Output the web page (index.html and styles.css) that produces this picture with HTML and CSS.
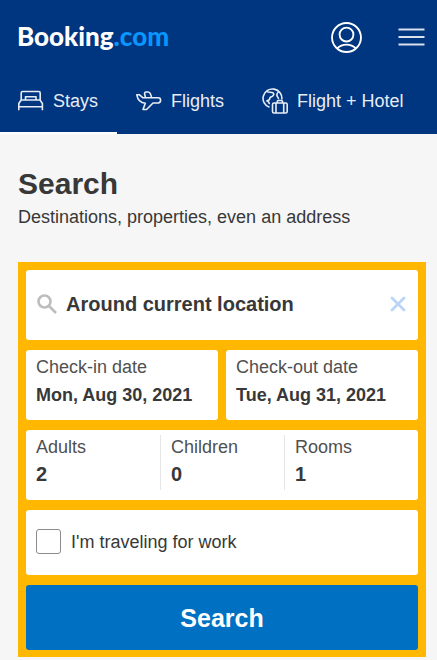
FILE: index.html
```html
<!DOCTYPE html>
<html lang="en">
<head>
  <meta charset="utf-8">
  <meta name="viewport" content="width=device-width, initial-scale=1">
  <title>Booking.com</title>
  <link rel="stylesheet" href="styles.css">
</head>
<body>
  <header class="header">
    <div class="topbar">
      <a class="logo" href="#">Booking<span class="logo-tld">.com</span></a>
      <div class="actions">
        <button class="icon-button" type="button" aria-label="Account">
          <svg class="account-icon" viewBox="0 0 30 30" aria-hidden="true">
            <circle cx="15" cy="15" r="14"/>
            <circle cx="15" cy="12.2" r="6.700"/>
            <path d="M6 25.600c2.300-2.400 5.500-3.700 9-3.700s6.700 1.300 9 3.700"/>
          </svg>
        </button>
        <button class="icon-button" type="button" aria-label="Menu">
          <svg class="menu-icon" viewBox="0 0 26 18" aria-hidden="true">
            <path d="M0 1.500h26M0 9h26M0 16.500h26"/>
          </svg>
        </button>
      </div>
    </div>
    <nav class="tabs">
      <a class="tab tab-active" href="#">
        <svg class="tab-icon" viewBox="0 0 26 26" aria-hidden="true">
          <path d="M.8 22.300V15.500L3.200 12h18.800l2.400 3.500v6.800M.8 18.700h23.600M3.200 12V5q0-1.500 1.500-1.500h16q1.500 0 1.500 1.500v7M7.500 12V8.800h10.500V12"/>
        </svg>
        Stays
      </a>
      <a class="tab" href="#">
        <svg class="tab-icon" viewBox="0 0 26 26" aria-hidden="true">
          <path d="M.8 6.800h2.700l3.500 3h15.200c3.200 0 3.200 5 0 5.200h-5.200L10.600 21.500H7l2.300-6.200C4.500 14.800 1.500 11 .8 6.800zM9.500 9.700L8.600 5.800C8.500 4.500 9 4 10 4h2c1.800 0 2.800 1.500 3.500 5.500"/>
        </svg>
        Flights
      </a>
      <a class="tab" href="#">
        <svg class="tab-icon" viewBox="0 0 26 26" aria-hidden="true">
          <path d="M7.500 19.300A9.400 9.400 0 1 1 19.800 11.500M5 3.600c2 1.200 4 .2 6 1.200 1.500 1.200.5 3-1 3.700-2 .5-2.500 1.500-2.500 3-1 1.200-2.500.5-3 2M5 13c1.500.5 2.500 1.500 2.200 3.200M16.800 3.500c-1.800 1.500-2.300 3.700-1.300 5.200.8.8 1 1.500 1 2.500"/>
          <rect x="10.500" y="15" width="14.700" height="10" rx="1.500"/>
          <path d="M14 15v10M21.700 15v10M15.200 15v-1.300q0-1.200 1.200-1.200h3q1.200 0 1.200 1.200V15"/>
        </svg>
        Flight + Hotel
      </a>
    </nav>
  </header>

  <main class="main">
    <h1 class="title">Search</h1>
    <p class="subtitle">Destinations, properties, even an address</p>

    <form class="search-form">
      <div class="card destination">
        <svg class="search-icon" viewBox="0 0 20 20" aria-hidden="true">
          <circle cx="7.500" cy="7.500" r="6"/>
          <path d="M12 12l7 7"/>
        </svg>
        <input class="destination-input" type="text" aria-label="Destination" value="Around current location">
        <button class="clear-button" type="button" aria-label="Clear destination">
          <svg class="clear-icon" viewBox="0 0 16 16" aria-hidden="true">
            <path d="M2 2l12 12M14 2L2 14"/>
          </svg>
        </button>
      </div>

      <div class="dates">
        <button class="card date" type="button">
          <span class="label">Check-in date</span>
          <span class="date-value">Mon, Aug 30, 2021</span>
        </button>
        <button class="card date" type="button">
          <span class="label">Check-out date</span>
          <span class="date-value">Tue, Aug 31, 2021</span>
        </button>
      </div>

      <div class="card guests">
        <button class="guest" type="button">
          <span class="label">Adults</span>
          <span class="guest-value">2</span>
        </button>
        <button class="guest" type="button">
          <span class="label">Children</span>
          <span class="guest-value">0</span>
        </button>
        <button class="guest" type="button">
          <span class="label">Rooms</span>
          <span class="guest-value">1</span>
        </button>
      </div>

      <label class="card work" for="work">
        <input class="checkbox" id="work" type="checkbox">
        I'm traveling for work
      </label>

      <button class="submit" type="submit">Search</button>
    </form>
  </main>
</body>
</html>
```

FILE: styles.css
```css
* {
  box-sizing: border-box;
}

body {
  margin: 0;
  background: #f6f6f6;
  color: #383838;
  font-family: "Liberation Sans", Arial, sans-serif;
  font-size: 18px;
  line-height: 24px;
}

button,
input {
  margin: 0;
  padding: 0;
  border: 0;
  background: none;
  color: inherit;
  font: inherit;
  text-align: left;
}

svg {
  display: block;
  flex: none;
  fill: none;
  stroke: currentColor;
}

.header {
  background: #003580;
  color: #fff;
}

.topbar {
  display: flex;
  align-items: center;
  justify-content: space-between;
  height: 74px;
  padding: 0 12px 0 17px;
}

.logo {
  padding-bottom: 3px;
  color: #fff;
  font-family: Lato, sans-serif;
  font-size: 26px;
  font-weight: 900;
  text-decoration: none;
}

.logo-tld {
  color: #0896ff;
}

.actions {
  display: flex;
  align-items: center;
  gap: 36px;
}

.account-icon {
  width: 31px;
  height: 31px;
  stroke-width: 1.8;
}

.menu-icon {
  width: 27px;
  height: 18px;
  stroke-width: 2;
  opacity: 0.85;
}

.tabs {
  display: flex;
}

.tab {
  display: flex;
  align-items: center;
  gap: 9px;
  height: 60px;
  padding: 0 19px 4px;
  border-bottom: 2px solid transparent;
  color: #e8edf5;
  text-decoration: none;
  white-space: nowrap;
}

.tab-active {
  padding-left: 18px;
  border-bottom-color: #fff;
}

.tab-icon {
  width: 26px;
  height: 26px;
  stroke-width: 1.6;
  stroke-linejoin: round;
}

.main {
  padding: 32px 11px 3px 18px;
}

.title {
  margin: 0;
  font-size: 30px;
  line-height: 36px;
}

.subtitle {
  margin: 3px 0 33px;
}

.search-form {
  display: flex;
  flex-direction: column;
  gap: 10px;
  padding: 8px 8px 7px;
  background: #ffb700;
}

.card {
  border-radius: 3px;
  background: #fff;
}

.destination {
  display: flex;
  align-items: center;
  height: 70px;
  padding: 0 12px 2px 11px;
}

.search-icon {
  width: 20px;
  height: 20px;
  color: #bdbdbd;
  stroke-width: 2.6;
}

.destination-input {
  flex: 1;
  min-width: 0;
  margin-left: 9px;
  font-size: 20px;
  font-weight: 700;
}

.clear-icon {
  width: 16px;
  height: 16px;
  color: #bad4f7;
  stroke-width: 2.8;
  stroke-linecap: round;
}

.dates {
  display: grid;
  grid-template-columns: 1fr 1fr;
  gap: 8px;
}

.date {
  display: flex;
  flex-direction: column;
  gap: 4px;
  height: 70px;
  padding: 5px 10px;
}

.label {
  color: #505050;
}

.date-value {
  font-weight: 700;
}

.guests {
  display: grid;
  grid-template-columns: repeat(3, 1fr);
  height: 70px;
  padding: 5px 10px 10px;
}

.guest {
  display: flex;
  flex-direction: column;
  gap: 3px;
}

.guest + .guest {
  padding-left: 10px;
  border-left: 1px solid #e6e6e6;
}

.guest-value {
  font-size: 20px;
  font-weight: 700;
}

.work {
  display: flex;
  align-items: center;
  gap: 10px;
  height: 65px;
  padding: 0 10px 2px;
}

.checkbox {
  width: 25px;
  height: 25px;
  border: 1px solid #8c8c8c;
  border-radius: 3px;
  appearance: none;
}

.submit {
  height: 65px;
  border-radius: 3px;
  background: #0071c2;
  color: #fff;
  font-size: 25px;
  font-weight: 700;
  text-align: center;
}
```
